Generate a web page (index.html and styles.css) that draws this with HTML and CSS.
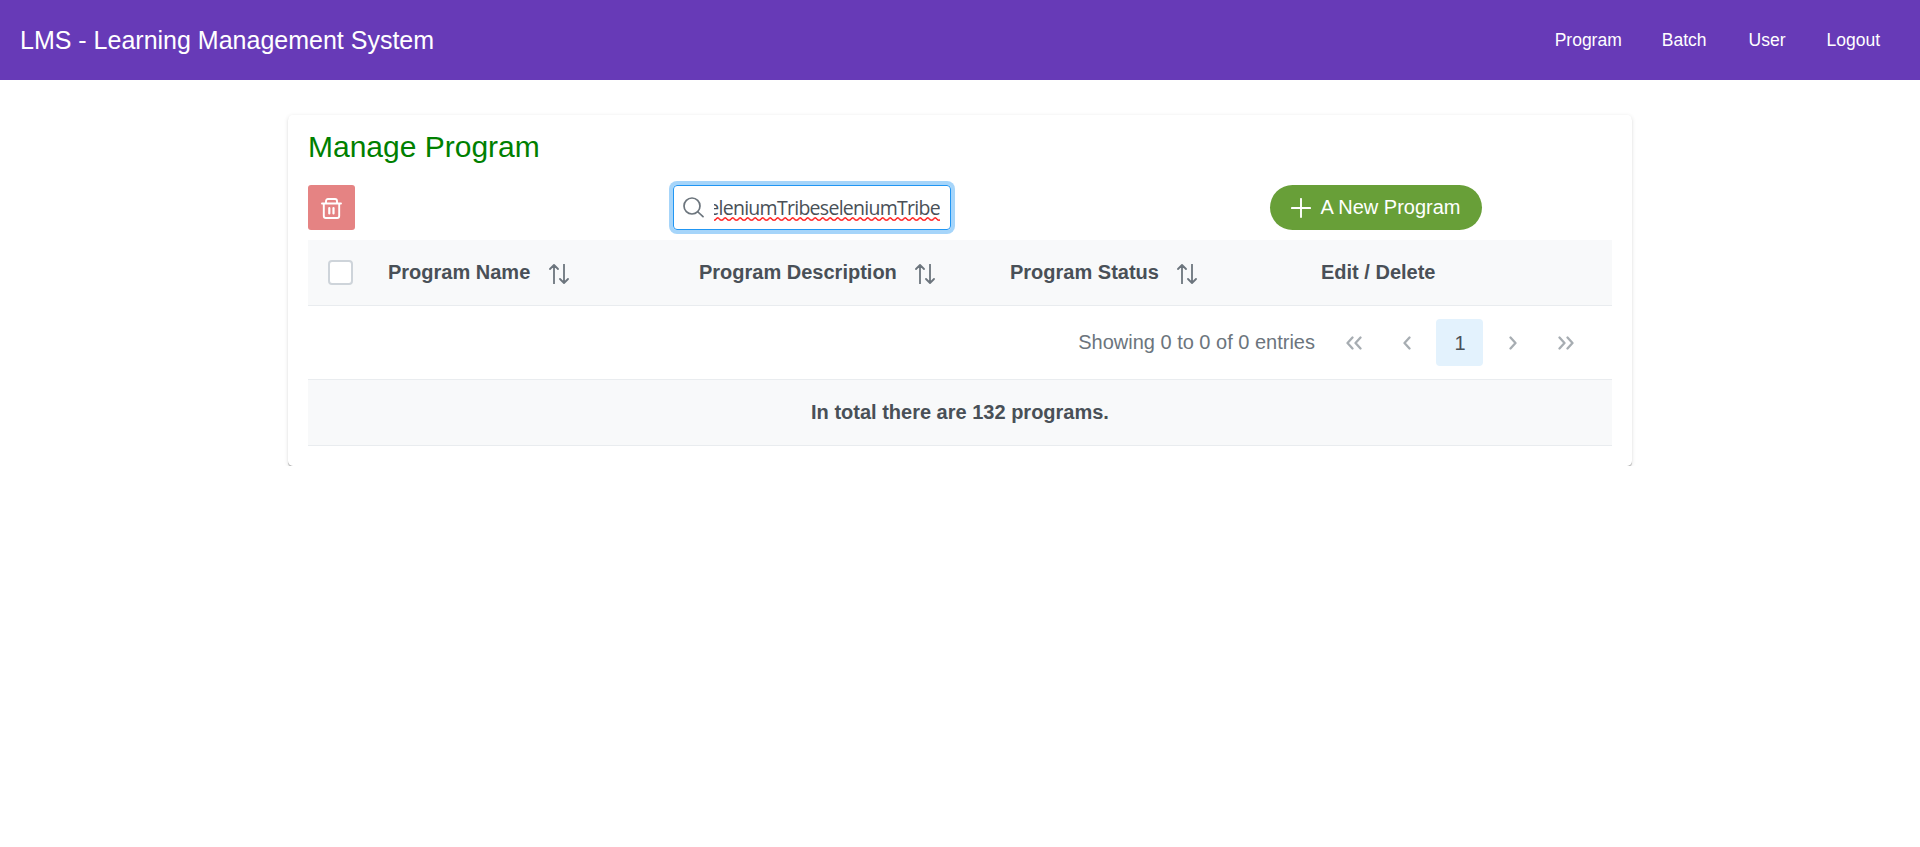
FILE: index.html
```html
<!DOCTYPE html>
<html lang="en">
<head>
<meta charset="utf-8">
<title>LMS</title>
<link rel="stylesheet" href="styles.css">
</head>
<body>
<svg class="defs" width="0" height="0">
  <symbol id="sort" viewBox="0 0 20 20"><path d="M5 19.500V1.200M1 5 5 1l4 4M15 .5v18.300M11 15l4 4 4-4" fill="none" stroke="currentColor" stroke-width="1.800" stroke-linecap="round" stroke-linejoin="round"/></symbol>
  <symbol id="chev" viewBox="0 0 8 14"><path d="M6.500 1.500 1.500 7l5 5.500" fill="none" stroke="currentColor" stroke-width="2.300" stroke-linecap="round" stroke-linejoin="round"/></symbol>
</svg>
<header class="navbar">
  <div class="brand">LMS - Learning Management System</div>
  <nav class="menu"><a class="program">Program</a><a class="batch">Batch</a><a class="user">User</a><a class="logout">Logout</a></nav>
</header>
<main class="card">
  <h1 class="title">Manage Program</h1>
  <div class="toolbar">
    <button class="delete" aria-label="Delete">
      <svg width="21" height="21" viewBox="0 0 21 21" fill="none" stroke="#fff" stroke-width="1.900" stroke-linecap="round" stroke-linejoin="round"><path d="M1 5.500h19M2.800 5.500V18c0 1.200.8 2 2 2h11.400c1.200 0 2-.8 2-2V5.500M5 5.500V3c0-1.200.8-2 2-2h7c1.200 0 2 .8 2 2v2.500"/><path d="M8.300 10v5.500M12.500 10v5.500" stroke-width="2.200"/></svg>
    </button>
    <div class="search">
      <svg class="glass" width="21" height="21" viewBox="0 0 21 21" fill="none" stroke="#6c757d" stroke-width="1.700" stroke-linecap="round"><circle cx="9" cy="9" r="8"/><path d="m15 15 5 4.700"/></svg>
      <div class="field"><span class="value">seleniumTribeseleniumTribe</span>
        <svg class="squiggle" width="226" height="4"><defs><pattern id="wave" width="7.500" height="4" patternUnits="userSpaceOnUse"><path d="M-1 2.200 0 3.200 1 3.200 3.200.9h1L6.500 3.200h1l1-1" fill="none" stroke="#f00" stroke-width="1.300"/></pattern></defs><rect width="226" height="4" fill="url(#wave)"/></svg>
      </div>
    </div>
    <button class="new">
      <svg width="20" height="20" viewBox="0 0 20 20" stroke="#fff" stroke-width="1.900" stroke-linecap="round"><path d="M10 .9v18.200M.9 10h18.200"/></svg>
      <span>A New Program</span>
    </button>
  </div>
  <div class="row head">
    <div class="cell"><span class="box"></span></div>
    <div class="cell">Program Name<svg class="sort"><use href="#sort"/></svg></div>
    <div class="cell">Program Description<svg class="sort"><use href="#sort"/></svg></div>
    <div class="cell">Program Status<svg class="sort"><use href="#sort"/></svg></div>
    <div class="cell">Edit / Delete</div>
  </div>
  <div class="paginator">
    <span class="info">Showing 0 to 0 of 0 entries</span>
    <span class="page prev"><svg class="chev"><use href="#chev"/></svg><svg class="chev"><use href="#chev"/></svg></span>
    <span class="page prev"><svg class="chev"><use href="#chev"/></svg></span>
    <span class="page current">1</span>
    <span class="page next"><svg class="chev"><use href="#chev"/></svg></span>
    <span class="page next"><svg class="chev"><use href="#chev"/></svg><svg class="chev"><use href="#chev"/></svg></span>
  </div>
  <div class="footer">In total there are 132 programs.</div>
</main>
</body>
</html>
```

FILE: styles.css
```css
* { box-sizing: border-box; }
body { margin: 0; background: #fff; font-family: "Liberation Sans", Arial, sans-serif; font-size: 20px; color: #495057; }
.defs { position: absolute; }
.navbar { height: 80px; padding: 0 40px 0 20px; background: #673ab7; color: #fff; display: flex; align-items: center; justify-content: space-between; }
.brand { font-size: 25px; line-height: 30px; }
.menu { display: flex; gap: 41px; font-size: 17.5px; }
.program { margin-right: -1px; }
.batch { margin-right: 1px; }
.card { width: 1344px; height: 351px; margin: 35px auto 0; padding: 14px 20px 20px; border-radius: 5px; background: #fff; box-shadow: 0 1px 0 #b4b4b4, 0 2px 1px rgba(0,0,0,.14), 0 1px 4px rgba(0,0,0,.12); }
.title { margin: 0 0 21px; font-size: 30px; line-height: 35px; font-weight: 400; color: green; }
.toolbar { height: 45px; margin-bottom: 10px; display: flex; }
button { border: 0; padding: 0; font: inherit; color: #fff; display: flex; align-items: center; justify-content: center; }
.delete { width: 47px; height: 45px; border-radius: 3px; background: #e58383; padding-top: 1px; }
.search { width: 278px; height: 45px; margin-left: 318px; border: 1px solid #2196f3; border-radius: 4px; box-shadow: 0 0 0 4px #a6d5fa; display: flex; padding: 0 10px 0 9px; align-items: center; justify-content: space-between; }
.glass { margin-bottom: 1px; }
.field { position: relative; width: 226px; height: 30px; overflow: hidden; display: flex; justify-content: flex-end; }
.value { font-family: "Open Sans", "Noto Sans", sans-serif; font-size: 19.5px; line-height: 30px; letter-spacing: -.72px; white-space: nowrap; }
.squiggle { position: absolute; left: 0; bottom: 2px; }
.new { width: 212px; height: 45px; margin-left: 319px; border-radius: 23px; background: #689f38; gap: 9px; }
.new svg { margin-top: 1px; }
.new span { line-height: 24px; margin-bottom: 2px; }
.row { display: grid; grid-template-columns: 60px repeat(4, 311px); }
.head { height: 66px; background: #f8f9fa; border-bottom: 1px solid #e9ecef; font-weight: 700; }
.cell { display: flex; align-items: center; padding-left: 20px; }
.box { flex: none; width: 25px; height: 25px; border: 2px solid #ced4da; border-radius: 4px; background: #fff; }
.sort { width: 20px; height: 20px; margin: 3px 0 0 18.5px; color: #6c757d; }
.paginator { height: 73px; display: flex; align-items: center; justify-content: flex-end; gap: 6px; padding-right: 23px; color: #6c757d; }
.info { margin-right: 9px; }
.page { width: 47px; height: 47px; border-radius: 4px; display: flex; align-items: center; justify-content: center; color: #495057; }
.current { background: #e3f2fd; padding: 1px 0 0 1px; }
.chev { width: 8px; height: 14px; color: #a7adb2; }
.prev { padding-left: 1px; }
.next { transform: scaleX(-1); padding-right: 1px; }
.footer { height: 67px; border: 1px solid #e9ecef; border-width: 1px 0; background: #f8f9fa; font-weight: 700; display: flex; align-items: center; justify-content: center; }
```
